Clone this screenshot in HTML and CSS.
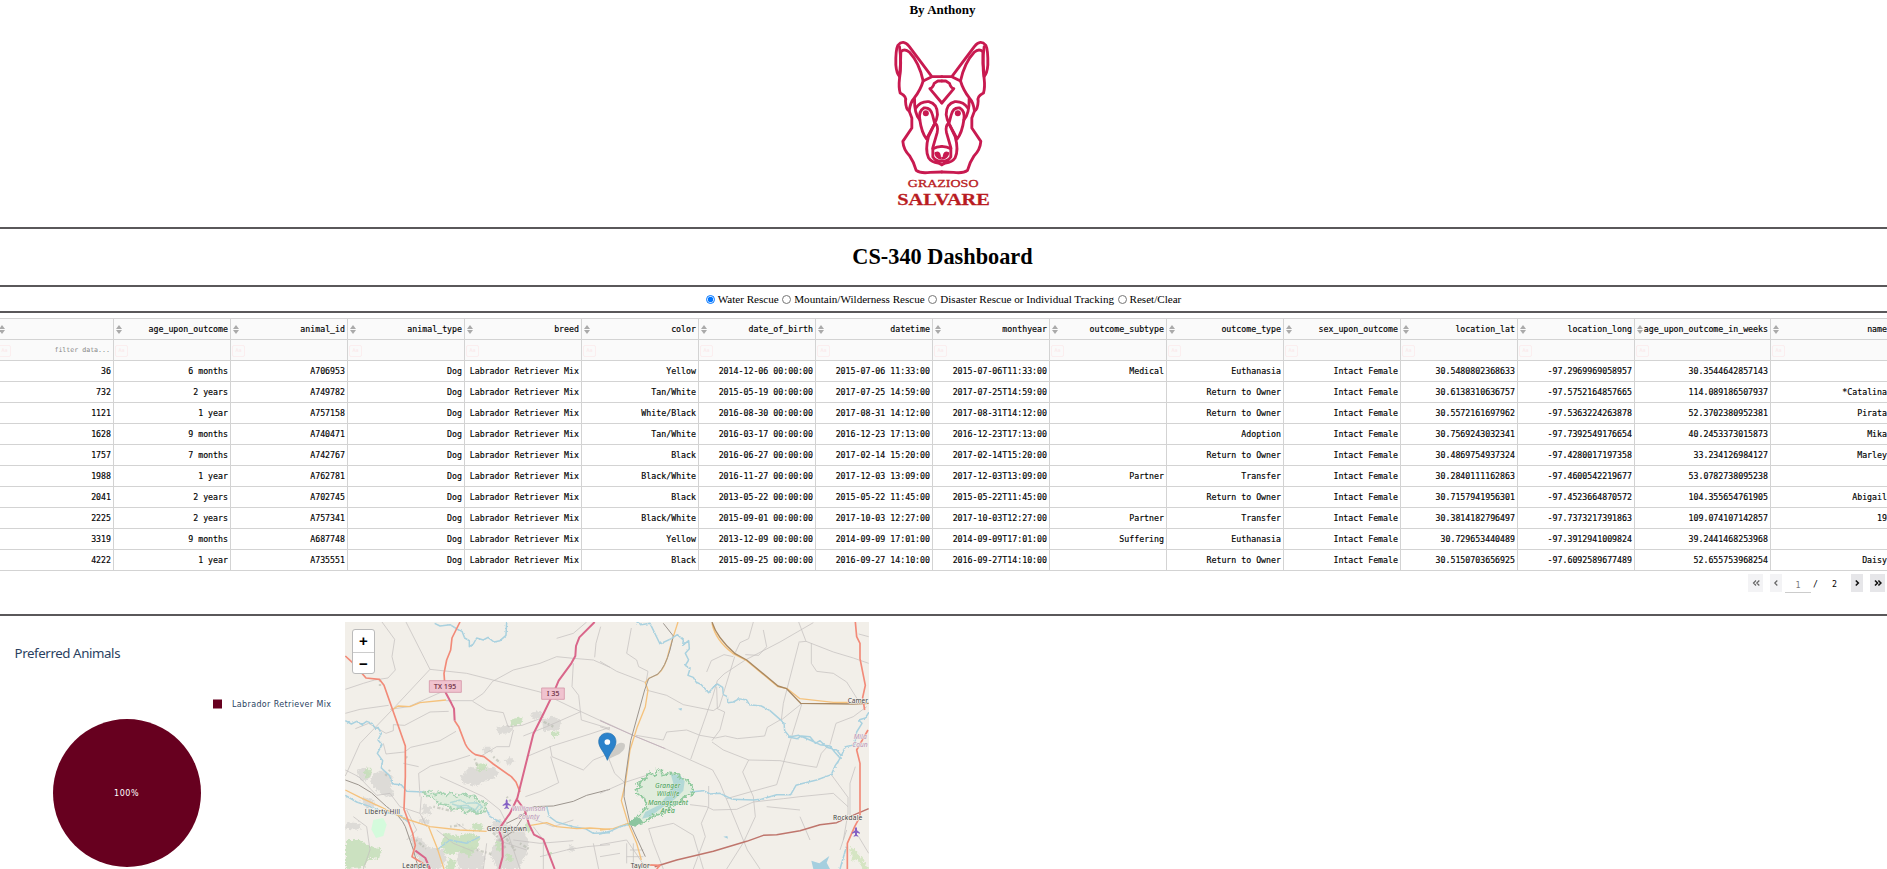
FILE: index.html
```html
<!DOCTYPE html>
<html lang="en">
<head>
<meta charset="utf-8">
<title>CS-340 Dashboard</title>
<link rel="stylesheet" href="styles.css">
</head>
<body>
<header class="masthead">
  <b class="byline">By Anthony</b>
  <svg class="logo" viewBox="25.5 90 450 540">
    <g class="dog">
      <g id="half">
        <path d="M244 230H214L146 139Q128 117 112 136Q105 150 106 195Q108 220 117 230Q121 190 121 155Q133 144 147 157Q176 188 188 243L214 230"/>
        <path d="M117 140Q124 190 117 236Q114 262 119 279Q139 289 135 303Q136 329 146 333L154 354V384L127 424Q129 449 147 467Q160 486 167 511Q180 521 209 517L244 516"/>
        <path d="M188 243Q180 270 162 293Q149 307 146 333M162 293Q161 342 178 360Q183 397 198 417L221 374"/>
        <path d="M165 325Q180 303 205 305Q231 311 231 344Q229 360 221 374M178 360Q173 334 190 324Q210 321 216 345L222 368Q235 378 230 398L217 443V470Q226 485 244 483M221 374L204 410Q193 450 204 473Q213 487 233 489L244 494"/>
        <path d="M244 309L208 266Q217 264 221 250L232 243H244M217 446Q228 440 244 439M226 460Q235 455 237 468M226 460Q229 472 240 474"/>
        <circle class="eye" cx="196" cy="340" r="9"/>
      </g>
      <use href="#half" transform="matrix(-1 0 0 1 488 0)"/>
    </g>
    <text class="brand" x="142" y="561" font-size="29" textLength="212" lengthAdjust="spacingAndGlyphs">GRAZIOSO</text>
    <text class="brand strong" x="110" y="615" font-size="48" textLength="278" lengthAdjust="spacingAndGlyphs">SALVARE</text>
  </svg>
</header>
<h1 class="title">CS-340 Dashboard</h1>
<form class="filters">
  <label><input type="radio" name="f" checked><span>Water Rescue</span></label>
  <label><input type="radio" name="f"><span>Mountain/Wilderness Rescue</span></label>
  <label><input type="radio" name="f"><span>Disaster Rescue or Individual Tracking</span></label>
  <label><input type="radio" name="f"><span>Reset/Clear</span></label>
</form>
<main class="data">
<table class="grid">
<colgroup><col span="14" class="c"><col class="wide"><col class="last"></colgroup>
<thead>
<tr class="head"><th></th><th>age_upon_outcome</th><th>animal_id</th><th>animal_type</th><th>breed</th><th>color</th><th>date_of_birth</th><th>datetime</th><th>monthyear</th><th>outcome_subtype</th><th>outcome_type</th><th>sex_upon_outcome</th><th>location_lat</th><th>location_long</th><th>age_upon_outcome_in_weeks</th><th>name</th></tr>
<tr class="filter"><th>filter data...</th><th></th><th></th><th></th><th></th><th></th><th></th><th></th><th></th><th></th><th></th><th></th><th></th><th></th><th></th><th></th></tr>
</thead>
<tbody>
<tr><td>36<td>6 months<td>A706953<td>Dog<td>Labrador Retriever Mix<td>Yellow<td>2014-12-06 00:00:00<td>2015-07-06 11:33:00<td>2015-07-06T11:33:00<td>Medical<td>Euthanasia<td>Intact Female<td>30.5480802368633<td>-97.2969969058957<td>30.3544642857143<td></tr>
<tr><td>732<td>2 years<td>A749782<td>Dog<td>Labrador Retriever Mix<td>Tan/White<td>2015-05-19 00:00:00<td>2017-07-25 14:59:00<td>2017-07-25T14:59:00<td><td>Return to Owner<td>Intact Female<td>30.6138310636757<td>-97.5752164857665<td>114.089186507937<td>*Catalina</tr>
<tr><td>1121<td>1 year<td>A757158<td>Dog<td>Labrador Retriever Mix<td>White/Black<td>2016-08-30 00:00:00<td>2017-08-31 14:12:00<td>2017-08-31T14:12:00<td><td>Return to Owner<td>Intact Female<td>30.5572161697962<td>-97.5363224263878<td>52.3702380952381<td>Pirata</tr>
<tr><td>1628<td>9 months<td>A740471<td>Dog<td>Labrador Retriever Mix<td>Tan/White<td>2016-03-17 00:00:00<td>2016-12-23 17:13:00<td>2016-12-23T17:13:00<td><td>Adoption<td>Intact Female<td>30.7569243032341<td>-97.7392549176654<td>40.2453373015873<td>Mika</tr>
<tr><td>1757<td>7 months<td>A742767<td>Dog<td>Labrador Retriever Mix<td>Black<td>2016-06-27 00:00:00<td>2017-02-14 15:20:00<td>2017-02-14T15:20:00<td><td>Return to Owner<td>Intact Female<td>30.4869754937324<td>-97.4280017197358<td>33.234126984127<td>Marley</tr>
<tr><td>1988<td>1 year<td>A762781<td>Dog<td>Labrador Retriever Mix<td>Black/White<td>2016-11-27 00:00:00<td>2017-12-03 13:09:00<td>2017-12-03T13:09:00<td>Partner<td>Transfer<td>Intact Female<td>30.2840111162863<td>-97.4600542219677<td>53.0782738095238<td></tr>
<tr><td>2041<td>2 years<td>A702745<td>Dog<td>Labrador Retriever Mix<td>Black<td>2013-05-22 00:00:00<td>2015-05-22 11:45:00<td>2015-05-22T11:45:00<td><td>Return to Owner<td>Intact Female<td>30.7157941956301<td>-97.4523664870572<td>104.355654761905<td>Abigail</tr>
<tr><td>2225<td>2 years<td>A757341<td>Dog<td>Labrador Retriever Mix<td>Black/White<td>2015-09-01 00:00:00<td>2017-10-03 12:27:00<td>2017-10-03T12:27:00<td>Partner<td>Transfer<td>Intact Female<td>30.3814182796497<td>-97.7373217391863<td>109.074107142857<td>19</tr>
<tr><td>3319<td>9 months<td>A687748<td>Dog<td>Labrador Retriever Mix<td>Yellow<td>2013-12-09 00:00:00<td>2014-09-09 17:01:00<td>2014-09-09T17:01:00<td>Suffering<td>Euthanasia<td>Intact Female<td>30.729653440489<td>-97.3912941009824<td>39.2441468253968<td></tr>
<tr><td>4222<td>1 year<td>A735551<td>Dog<td>Labrador Retriever Mix<td>Black<td>2015-09-25 00:00:00<td>2016-09-27 14:10:00<td>2016-09-27T14:10:00<td><td>Return to Owner<td>Intact Female<td>30.5150703656925<td>-97.6092589677489<td>52.655753968254<td>Daisy</tr>
</tbody>
</table>
<nav class="pager">
  <span class="btn dbl off"><svg viewBox="0 0 8 8"><path d="M4 1.500L1.500 4L4 6.500M7.300 1.500L4.800 4L7.300 6.500"/></svg></span>
  <span class="btn off"><svg viewBox="0 0 8 8"><path d="M5.300 1.500L2.800 4L5.300 6.500"/></svg></span>
  <span class="page">1</span><span class="slash">/</span><span class="total">2</span>
  <span class="btn"><svg viewBox="0 0 8 8"><path d="M2.800 1.500L5.300 4L2.800 6.500"/></svg></span>
  <span class="btn dbl"><svg viewBox="0 0 8 8"><path d="M1 1.500L3.500 4L1 6.500M4.400 1.500L6.900 4L4.400 6.500"/></svg></span>
</nav>
</main>
<section class="charts">
  <svg class="pie" viewBox="0 0 345 247">
    <text class="ptitle" x="14.5" y="36" textLength="106">Preferred Animals</text>
    <rect x="213" y="77.500" width="9" height="9" fill="#67001f"/>
    <text class="plabel" x="232" y="85" textLength="99">Labrador Retriever Mix</text>
    <circle cx="127" cy="171" r="74" fill="#67001f"/>
    <text class="pvalue" x="114" y="174" textLength="24.500">100%</text>
  </svg>
  <div class="mapbox">
  <svg class="map" viewBox="0 0 524 247">
    <defs>
      <filter id="wiggle" filterUnits="userSpaceOnUse" x="-20" y="0" width="900" height="800"><feTurbulence type="fractalNoise" baseFrequency=".16" numOctaves="2" seed="4"/><feDisplacementMap in="SourceGraphic" scale="7" xChannelSelector="R" yChannelSelector="G"/></filter>
      <filter id="ragged" filterUnits="userSpaceOnUse" x="-20" y="0" width="900" height="800"><feTurbulence type="fractalNoise" baseFrequency=".13" numOctaves="3" seed="9"/><feDisplacementMap in="SourceGraphic" scale="17" xChannelSelector="R" yChannelSelector="G"/></filter>
    </defs>
    <g transform="translate(-5 -12) scale(.33333)">
      <!-- built-up areas -->
      <g class="urban" filter="url(#ragged)">
        <path d="M102 490l26-10 30 22-6 28 14 24-30 8-28-24-18-22zM50 480l26-8 20 22-16 22-24-10zM360 500l30-30 30 6 40-6 20 24-40 18-30 16-40-8zM470 352l34-8 16 14-10 12-36 2zM606 328l36-8 22 14-8 26-46 4zM430 410l22 0 4 16-24 4zM490 452l20-12 14 14-20 10zM570 310l30-8 8 20-28 4z"/>
        <path d="M452 640l22-12 34 20 40 6 20 46-6 30-26 47H470l-18-44 8-26 12-30zM370 710l40 0 26 30-10 37h-70l-6-40zM210 680l34 4 16 26 50 8 10 34-24 25h-42l-32-50zM60 560l36 6 10 22-26 8zM250 580l26 12-6 22-24-4zM18 636l40 4 4 20-46-4zM690 706l14 4-4 16-16-6zM240 620l30 10-4 14-30-6z"/>
      </g>
      <g class="green" filter="url(#ragged)">
        <path d="M76 476l20 0-4 22-18 6zM508 330l40-10-4 20-30 10zM636 366l20-2-2 16-18 2zM416 460l30 2-10 16-24 8zM18 690l40 0 36 22 30 6-6 26-34 4-10 22-56 7zM314 670l40 8 40-8 24 12-2 26-24 30-34-12-36 10-20-30zM328 744l22 10-8 23h-24zM470 690l16 8-4 26-16-4zM556 640l14 2 4 24-18-4zM620 728l16-2-4 16zM400 640l30 4-6 20-30-6zM500 730l20 6-4 20-18-4z"/>
      </g>
      <path class="mint" d="M100 630l30-6 10 20-10 34-22 6-14-26z"/>
      <path class="speckle" d="M120 210v18M404 446l8 22M198 440l8 8M460 440l20 18M510 650l12 18M450 660l26 24 20 30M492 676l34 46M410 720l44 12M150 480l-16 20M228 690l30 26M600 330l40 20M540 700l32 20M280 590l60 14M330 650l40-6M500 560l12 14"/>
      <!-- county lines and minor roads -->
      <g class="minor">
        <path d="M198 36L270 178L156 300L60 400L16 498M270 178L380 190L600 246L708 298L810 345"/>
        <path d="M126 36L164 88L156 140L166 180L144 204L104 210L70 220L16 238M16 310L60 298L146 286M150 298L206 290L318 240M318 272L398 272L430 250L458 214L520 180L600 160L650 140L700 145L760 150L810 172"/>
        <path d="M46 356L86 340L138 370L160 362V344L194 346L270 306L326 304M130 400L138 432L194 426L212 412L300 392L348 364M398 274L440 300L490 308L504 350L546 346L600 326M740 36L700 70L650 85M782 50L768 100L764 142M700 160L696 230L716 256L724 330L810 356M550 378L620 350L720 306M560 440L636 408L750 372L810 352M630 408L636 440L730 480L760 450L810 430M520 360L508 410L470 410L420 440M632 440L656 518L602 544L556 560"/>
        <path d="M16 480L56 500L110 556L150 550L180 590L240 610M240 560L236 490L272 468L340 452L390 436M190 460L236 470M300 500L366 530L430 560L480 600L500 640M260 650L240 610L244 560M40 620L80 650L90 720L70 777M560 620L640 650L700 630M600 740L680 720L740 710L810 704M520 690L600 700L700 692"/>
        <path d="M200 600L230 660L200 690M290 660L340 700L400 724M350 640L380 660M470 690L560 720M500 660L540 777M440 700L430 777M580 650L610 690L610 777M760 700L776 777"/>
      </g>
      <g class="rail"><path d="M16 510Q56 520 94 548L140 590Q184 620 196 650L220 720L236 777M580 590L640 588L700 574L740 556L810 538M500 640L540 620L580 590M482 690L524 660L550 620"/></g>
      <g class="river" filter="url(#wiggle)"><path d="M16 332L34 342L50 334L66 344L80 334L96 340L106 356L114 352L124 370L114 390L126 404L112 430L128 452L124 474L148 496L158 522L184 524L200 544L250 546M284 40L300 48L330 44L356 60L366 64L374 84L388 92L388 110L400 102L410 84L430 90L444 82L462 96L480 92L498 76L500 36M16 556L50 576L90 590L130 606L180 616L210 640M620 590L628 620L650 636L700 650L736 656L760 670L810 668M440 600L450 620L480 636M330 578L360 570L380 580L410 578L426 590L410 608L386 594L350 592M336 582L356 588L380 586L406 600L416 586M290 720L330 690L380 700L420 680"/></g>
      <g class="forest left" filter="url(#ragged)"><path d="M250 548L268 542L284 554L300 546L320 556L336 546L350 562L370 548L386 560L402 556L414 572L438 580L434 604L410 612L394 600L376 610L364 594L340 600L320 584L296 582L280 562L262 560z"/></g>
      <g class="yellow"><path d="M156 300L174 288L210 290L240 278L318 270M16 540L60 562L120 590L190 624L270 650L360 660L440 664M266 650L290 710L312 777M572 646L620 638L650 650L710 656L750 654L810 658"/></g>
      <g class="trunk"><path d="M360 36L336 84L332 120L320 150L312 190L316 246M16 138L40 160L78 204L118 208L132 226L196 408V500L192 598L218 670L226 706L216 740L246 758L270 777M344 332L356 350L376 402Q384 420 406 434L432 440L460 462L514 500L528 516L540 546"/></g>
      <g class="motor"><path d="M316 246L334 280L342 296L344 332M764 36L718 82L708 108L706 138L694 160L656 212L640 250L610 312L580 372L560 452L532 564L510 610L482 650L478 664L488 694V740L478 777M532 570L554 600L566 640L582 674L610 688L644 777M226 722L256 744L270 777"/></g>
      <g class="shield"><rect x="268" y="212" width="96" height="35"/><rect x="605" y="234" width="68" height="34"/></g>
      <g class="ref"><text x="282" y="237" textLength="66">TX 195</text><text x="621" y="258" textLength="37">I 35</text></g>
      <g class="town"><text x="74" y="613" textLength="106">Liberty Hill</text><text x="440" y="663" textLength="121">Georgetown</text><text x="187" y="773" textLength="80">Leander</text></g>
      <g class="county"><text x="516" y="602" textLength="100">Williamson</text><text x="534" y="627" textLength="64">County</text></g>
      <path id="plane" class="plane" d="M500 567l3 5v6l9 7v3l-9-3v6l4 4v2l-7-2-7 2v-2l4-4v-6l-9 3v-3l9-7v-6z"/>
    </g>
    <g transform="translate(255 -12) scale(.33333)">
      <g class="minor">
        <path d="M0 154L50 184L138 218M94 54L80 130L110 150L116 170L144 184L138 218M138 240L200 256L250 284L340 302L358 290L404 140M320 186L334 152L372 134L400 140M640 38L540 96L436 150L372 192L352 212L338 260L272 448M0 330L100 376L200 418L338 480L360 520L442 720L480 777M350 230L352 296L374 306L360 360L336 392M108 376L190 390L200 366L260 360L300 376L346 384L376 378L412 386L494 378L502 352L540 330"/>
        <path d="M336 396L370 420L446 450L540 452L600 464L650 472L664 430L684 408M598 94L550 280L544 330L606 280L530 524L450 546L380 566M596 36L618 94L600 96M618 94L700 126L760 144L806 160M460 36L446 86L420 98L402 136M436 134L476 136L500 110L490 60M634 100L634 160L650 184L700 190L740 216L780 280M446 450L428 486L460 560L466 620L430 698L380 777M0 550L72 518L140 496M270 584L320 590L340 600L410 598L460 576L550 566L600 560L700 550L744 590M326 528L326 590L304 640L316 680L280 777M800 290L760 320L708 340L690 404M694 494L744 562V610L730 690M766 470L750 520V620M146 656L220 640L280 676L310 777M146 656L160 700L190 777M0 704L80 690L140 777M600 620L630 690M776 680L806 730M20 430L44 490L72 516"/>
        <path d="M776 72L806 80M0 350L30 360M500 590L600 600M0 740L60 730M740 660L720 720M80 700V760M100 700V777M90 720H130M80 740H130"/>
      </g>
      <path class="purple" d="M0 332L108 380L196 416"/>
      <g class="yellow"><path d="M234 36L218 86L208 120Q196 176 172 194L148 204L136 218L144 240L136 290L112 350L90 420L76 520L64 572L84 638L110 700L124 750M336 40Q346 90 398 130L440 152L534 230L562 236L600 266L700 277H748M0 660L40 656L84 640"/></g>
      <g class="rail"><path d="M190 40L220 78L210 120Q196 170 174 192L146 206L134 240L92 392L74 520L72 560L90 640L136 740"/><path d="M336 36Q350 82 404 130L440 150L534 228L560 236L602 280L760 282L806 280" class="brown"/></g>
      <g class="river" filter="url(#wiggle)"><path d="M110 36L124 44L150 40L180 102L214 86L232 74L250 90L248 106L266 92L268 116L256 130L266 150L256 166L270 176L264 196L280 202L288 216L304 224L326 248L340 232L352 222L368 232L370 254L382 260L384 278L400 276L418 266L440 270L448 284L484 288L510 302L540 328L552 340L554 362L570 382L592 386L604 378L630 380L646 400L660 392L680 412L710 420L724 438L736 410L764 404L770 366L786 340L776 330L796 324L806 308M724 440L706 466L694 494L650 510L610 520L588 526L572 554L530 554L484 568L460 570L398 568L360 550L330 552L310 542L270 546M564 382L596 376L630 390L660 404L690 408L704 426L720 444L712 460M740 708L720 777M0 672L30 664L60 650L84 644"/></g>
      <g class="water"><path d="M212 492l28 4 14 18-4 28-26 26-34 22-40 30-24 6 10-20 40-20 26-30 18-36zM634 752l24 8 30-22-8 20 10 19h-50zM234 296l12-2-2 8zM370 680l12-2 2 8z"/></g>
      <g class="forest" filter="url(#ragged)"><path d="M108 520L132 510L146 490L164 496L172 480L184 482L186 498L206 490L238 492L240 504L262 510L276 528L280 552L256 558L242 574L212 590L190 612L160 616L136 634L100 648L92 638L120 614L140 592L134 566L112 552L106 538L126 530z"/></g>
      <path class="greenline" filter="url(#wiggle)" d="M86 642l16-14 16-4 8 10-20 14z"/>
      <path class="meadow" filter="url(#ragged)" d="M750 710l14 10 20 20 20 37h-14l-20-30-14 6z"/>
      <g class="secondary"><path d="M164 770L230 750L340 724L440 694L490 676L530 674L600 662L660 644L710 638L750 620L806 596"/></g>
      <g class="trunk"><path d="M766 36L770 80L780 100V146L796 226L788 262L794 300M804 360L770 420L780 460V620L764 650L742 700V777M124 764L180 766L170 777"/></g>
      <g class="town"><text x="743" y="279" textLength="61">Camer</text><text x="699" y="630" textLength="88">Rockdale</text><text x="92" y="775" textLength="57">Taylor</text></g>
      <g class="county"><text x="761" y="388" textLength="39">Mila</text><text x="757" y="412" textLength="46">Coun</text></g>
      <g class="park"><text x="165" y="534" textLength="76">Granger</text><text x="170" y="559" textLength="68">Wildlife</text><text x="144" y="585" textLength="120">Management</text><text x="182" y="610" textLength="42">Area</text></g>
      <use href="#plane" transform="translate(268 83)"/>
      <path class="shadow" d="M24 448L44 410Q60 392 74 402Q80 416 58 432z"/>
      <path class="pin" d="M22 369c-16 0-26 12-26 26 0 18 18 32 26 56 8-24 26-38 26-56 0-14-10-26-26-26z"/>
      <circle cx="22" cy="396" r="8.500" fill="#fff"/>
    </g>
  </svg>
  <div class="zoom"><span>+</span><span>−</span></div>
  </div>
</section>
</body>
</html>
```

FILE: styles.css
```css
* { box-sizing: border-box; }
html, body { margin: 0; height: 869px; overflow: hidden; background: #fff; }
body { font-family: "Liberation Serif", serif; color: #000; }
.masthead { height: 229px; border-bottom: 2px solid #5a585a; display: flex; flex-direction: column; align-items: center; }
.byline { font-size: 13px; line-height: 20px; height: 30px; padding-right: 2px; }
.logo { width: 150px; height: 180px; }
.dog path { fill: none; stroke: #c81a50; stroke-width: 8.5; stroke-linejoin: round; stroke-linecap: round; }
.eye { fill: #c81a50; }
.brand { font-family: "Liberation Serif", serif; fill: #b91b22; stroke: #b91b22; stroke-width: .8; }
.strong { font-weight: bold; }
.title { margin: 0; height: 58px; border-bottom: 2px solid #5a585a; font-size: 22.3px; line-height: 56px; text-align: center; padding-right: 2px; }
.filters { height: 26px; border-bottom: 2px solid #5a585a; display: flex; justify-content: center; align-items: center; gap: 3.5px; font-size: 11.1px; }
.filters label { display: flex; align-items: center; gap: 3px; }
.filters input { width: 9px; height: 9px; margin: 0; }
.data { height: 303px; border-bottom: 2px solid #5a585a; padding-top: 5px; overflow: hidden; }
.grid { margin-left: -3px; width: 1893px; table-layout: fixed; border-spacing: 0; border-top: 1px solid #d3d3d3; font-family: "DejaVu Sans Mono", monospace; font-size: 8.250px; -webkit-text-stroke: .15px; }
.c { width: 117px; }
.wide { width: 136px; }
.last { width: 119px; }
.grid th, .grid td { height: 21px; padding: 0 2px 0 0; line-height: 20px; border-right: 1px solid #d3d3d3; border-bottom: 1px solid #d3d3d3; text-align: right; font-weight: normal; white-space: nowrap; vertical-align: top; }
.grid td { line-height: 20px; }
.grid th { background: #fafafa; position: relative; line-height: 20px; }
.head th::before, .head th::after { content: ""; position: absolute; left: 2px; border: 3px solid transparent; }
.head th::before { top: 3px; border-bottom: 4px solid #aaa; }
.head th::after { top: 11px; border-top: 4px solid #aaa; border-bottom: 0; }
.grid .filter th { color: #858585; font-size: 6.600px; padding-right: 3px; -webkit-text-stroke: 0; }
.filter th::before { content: "Aa"; position: absolute; left: 1px; top: 5px; width: 11px; height: 10px; border: 1px solid #fbeeef; border-radius: 2px; color: #fbe6e8; font-size: 5px; line-height: 8px; text-align: center; }
.pager { display: flex; height: 24px; padding: 3px 2px 0 0; justify-content: flex-end; font: 8.250px/20px "DejaVu Sans Mono", monospace; }
.btn { width: 12px; height: 18px; background: #e6e6e9; display: flex; align-items: center; justify-content: center; margin-left: 7px; }
.btn.dbl { width: 15px; }
.btn svg { width: 8px; height: 8px; fill: none; stroke: #111; stroke-width: 1.600; }
.btn.off { background: #f3f3f5; }
.btn.off svg { stroke: #666; stroke-width: 1.200; }
.page { width: 26px; height: 19px; margin-left: 3px; border-bottom: 1px solid #ccc; text-align: center; color: #777; line-height: 22px; }
.slash { margin-left: 2px; }
.total { margin: 0 5px 0 14px; width: 7px; }
.btn + .page { margin-left: 3px; }
.charts { height: 253px; display: flex; }
.pie { width: 345px; height: 247px; margin-top: 6px; fill: #2a3f5f; }
.ptitle { font: 13.300px "Noto Sans", sans-serif; }
.plabel { font: 8px "DejaVu Sans", sans-serif; }
.pvalue { font: 8px "DejaVu Sans", sans-serif; fill: #fff; }
.mapbox { position: relative; width: 524px; height: 247px; margin-top: 6px; }
.map { display: block; width: 524px; height: 247px; background: #f2efe9; overflow: hidden; font-family: "Noto Sans", sans-serif; }
.map g { stroke-linejoin: round; }
.urban { fill: #d9d7d3; opacity: .8; }
.green { fill: #c5dfb9; opacity: .85; }
.mint { fill: #d4fbdc; }
.speckle { fill: none; stroke: #b5b9ad; stroke-width: 7; stroke-dasharray: 5 7 10 4; opacity: .6; }
.minor { fill: none; stroke: #c4c0be; stroke-width: 2.200; }
.rail { fill: none; stroke: #9c958e; stroke-width: 3; }
.rail .brown { stroke: #a88862; stroke-width: 4; }
.purple { fill: none; stroke: #c5b3bd; stroke-width: 3; }
.river { fill: none; stroke: #a9d1df; stroke-width: 4.500; }
.water { fill: #a5cfdf; }
.forest { fill: #c5e6c8; fill-opacity: .4; stroke: #8fc99d; stroke-width: 5; }
.forest.left { stroke: #a6d3b2; }
.greenline { fill: #8cc5a0; stroke: #8cc5a0; stroke-width: 3; }
.meadow { fill: #d5e5c3; }
.yellow { fill: none; stroke: #f5c27c; stroke-width: 4; }
.secondary { fill: none; stroke: #bf756c; stroke-width: 4.500; }
.trunk { fill: none; stroke: #f28a78; stroke-width: 5; }
.motor { fill: none; stroke: #d9668a; stroke-width: 6; }
.shield { fill: #f0c3cf; stroke: #d598a8; stroke-width: 2.500; }
.ref { font-size: 20px; fill: #6b2b41; stroke: #6b2b41; stroke-width: .5; }
.town { font-size: 20px; fill: #444; stroke: #f2efe9; stroke-width: 4; paint-order: stroke; }
.county { font-size: 20px; font-style: italic; fill: #b793b8; stroke: #f2efe9; stroke-width: 3; paint-order: stroke; }
.park { font-size: 20px; font-style: italic; fill: #3f9a4e; stroke: #e6f1e6; stroke-width: 2; paint-order: stroke; }
.plane { fill: #8461c4; }
.shadow { fill: #777; opacity: .3; }
.pin { fill: #2b82cb; stroke: #2671ae; stroke-width: 2; }
.zoom { position: absolute; left: 7px; top: 7px; width: 23px; height: 45px; background: #fff; border: 1px solid #bbb; border-radius: 3px; display: grid; grid-template-rows: 1fr 1fr; font: bold 15px/22px "Liberation Sans", sans-serif; text-align: center; }
.zoom span:first-child { border-bottom: 1px solid #ccc; }
```
